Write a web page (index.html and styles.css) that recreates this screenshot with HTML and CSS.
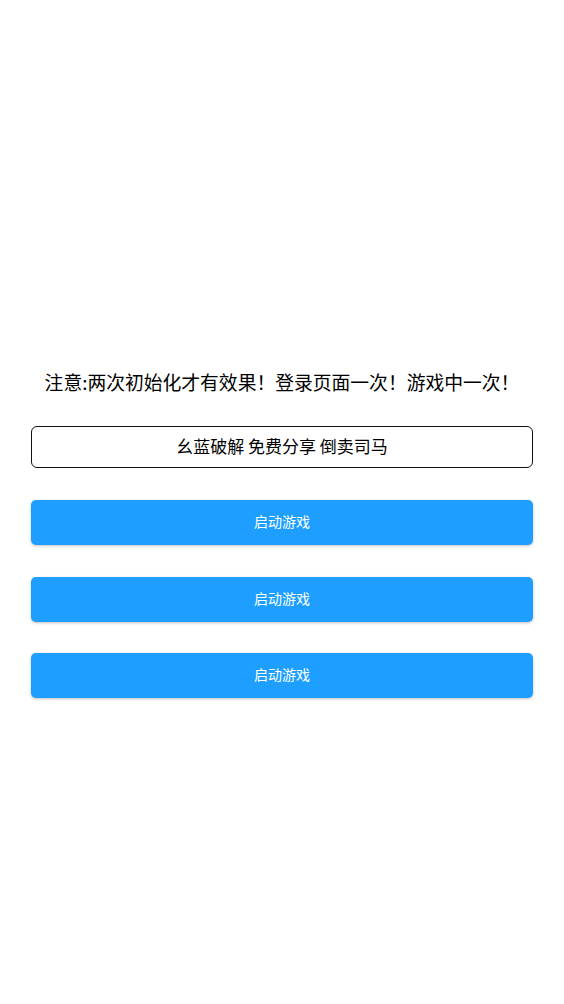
FILE: index.html
```html
<!DOCTYPE html>
<html lang="zh-CN">
<head>
  <meta charset="UTF-8" />
  <meta name="viewport" content="width=device-width, initial-scale=1.0"/>
  <title>启动游戏</title>
  <link rel="stylesheet" href="styles.css">
</head>
<body>
  <div id="panel">
    <div class="notice">注意:两次初始化才有效果！登录页面一次！游戏中一次！</div>
    <div class="share-box">幺蓝破解 免费分享 倒卖司马</div>
    <button class="start-btn">启动游戏</button>
    <button class="start-btn">启动游戏</button>
    <button class="start-btn">启动游戏</button>
  </div>
</body>
</html>
```

FILE: styles.css
```css
body {
  background: #fff;
  color: #000;
  font-family: "Noto Sans CJK SC", "Noto Sans", sans-serif;
  margin: 0;
}
#panel {
  display: flex;
  flex-direction: column;
  padding: 370px 31px 0 31px;
}
.notice {
  font-size: 18.8px;
  line-height: 24px;
  text-align: center;
  margin-bottom: 32px;
}
.share-box {
  height: 40px;
  border: 1px solid #111;
  border-radius: 6px;
  font-size: 17px;
  line-height: 38px;
  text-align: center;
  margin-bottom: 32px;
}
.start-btn {
  height: 45px;
  margin-bottom: 31.5px;
  padding: 0 0 3px 0;
  background: #1e9fff;
  color: #fff;
  border: none;
  border-radius: 5px;
  font-family: inherit;
  font-size: 14px;
  box-shadow: 0 1px 3px rgba(0, 0, 0, 0.25);
  cursor: pointer;
}
```
